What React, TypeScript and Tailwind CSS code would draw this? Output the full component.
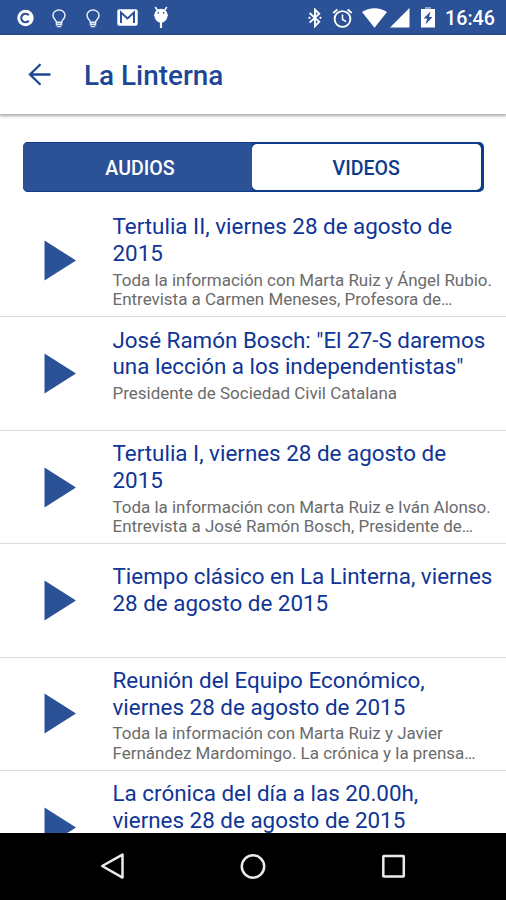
type Item = {
  title: string[];
  text: string[];
};

const items: Item[] = [
  {
    title: ["Tertulia II, viernes 28 de agosto de", "2015"],
    text: ["Toda la información con Marta Ruiz y Ángel Rubio.", "Entrevista a Carmen Meneses, Profesora de…"],
  },
  {
    title: ["José Ramón Bosch: \"El 27-S daremos", "una lección a los independentistas\""],
    text: ["Presidente de Sociedad Civil Catalana", ""],
  },
  {
    title: ["Tertulia I, viernes 28 de agosto de", "2015"],
    text: ["Toda la información con Marta Ruiz e Iván Alonso.", "Entrevista a José Ramón Bosch, Presidente de…"],
  },
  {
    title: ["Tiempo clásico en La Linterna, viernes", "28 de agosto de 2015"],
    text: [""],
  },
  {
    title: ["Reunión del Equipo Económico,", "viernes 28 de agosto de 2015"],
    text: ["Toda la información con Marta Ruiz y Javier", "Fernández Mardomingo. La crónica y la prensa…"],
  },
  {
    title: ["La crónica del día a las 20.00h,", "viernes 28 de agosto de 2015"],
    text: ["", ""],
  },
];

function Bulb() {
  return (
    <svg width="14" height="20" viewBox="0 0 14 20" fill="none" stroke="#e6ecf7" strokeWidth="1.5">
      <path d="M4.500 13.200c0-2-3.500-3.400-3.500-6.600a6 5.700 0 0 1 12 0c0 3.200-3.500 4.600-3.500 6.600z" />
      <path d="M4.500 13v3.500M9.500 13v3.500M4.500 15.300h5M4.800 17.400h4.400" />
    </svg>
  );
}

function StatusBar() {
  return (
    <div className="flex h-[35px] shrink-0 items-center bg-[#2b5197]">
      <svg className="ml-[17px]" width="17" height="18" viewBox="0 0 17 18" fill="none">
        <circle cx="8.500" cy="9" r="8.200" fill="#fff" />
        <path d="M11.800 6.200a4.300 4.300 0 1 0 0 5.600" stroke="#2b5197" strokeWidth="2.100" />
        <path d="M10.300 7v4" stroke="#fff" strokeWidth="1.600" />
      </svg>
      <div className="ml-[18px] mt-[2px]"><Bulb /></div>
      <div className="ml-[20px] mt-[2px]"><Bulb /></div>
      <svg className="ml-[17px]" width="21" height="17" viewBox="0 0 21 17">
        <rect x="0.3" y="0.3" width="20.4" height="16.4" rx="2" fill="#fff" />
        <path d="M4 14V3.5l6.5 6 6.5-6V14" fill="none" stroke="#2b5197" strokeWidth="2" />
      </svg>
      <svg className="ml-[15px]" width="16" height="23" viewBox="0 0 16 23" fill="#fff">
        <path d="M2.200 1l2.200 3.300M13.800 1l-2.200 3.300" stroke="#fff" strokeWidth="1.600" />
        <path d="M8 14v8" stroke="#fff" strokeWidth="2.200" />
        <path d="M1.500 8.500a6.500 5.800 0 0 1 13 0l.8.6-.9 1.4c-.5 3.500-3 6.100-6.400 6.100S2.100 14 1.600 10.500L.7 9.100z" />
        <circle cx="5.300" cy="6.800" r="0.900" fill="#2b5197" />
        <circle cx="10.700" cy="6.800" r="0.900" fill="#2b5197" />
      </svg>
      <svg className="ml-auto" width="14" height="20" viewBox="0 0 14 20" fill="none" stroke="#fff" strokeWidth="1.900">
        <path d="M1.600 5l9.600 8.900L7 18.200V1.600l4.200 4.100-9.600 8.900" />
        <path d="M1.400 9.800h.1M12.400 9.800h.1" strokeWidth="2.200" strokeLinecap="round" />
      </svg>
      <svg className="ml-[10px]" width="21" height="20" viewBox="0 0 21 20" fill="none" stroke="#fff" strokeWidth="1.900">
        <circle cx="10.500" cy="11" r="7.900" />
        <path d="M10.500 6.500v5l3.700 2.200" strokeWidth="1.500" />
        <path d="M1.200 4.900l4.200-3.500M19.800 4.900l-4.200-3.500" />
      </svg>
      <svg className="ml-[9px]" width="25" height="20" viewBox="0 0 25 20" fill="#fff">
        <path d="M0 4.100C7-1.100 18-1.100 25 4.100L12.500 19.700z" />
      </svg>
      <svg className="ml-[3px]" width="20" height="20" viewBox="0 0 20 20" fill="#fff">
        <path d="M0 19.500L19.500 0v19.500z" />
      </svg>
      <svg className="ml-[11px]" width="14" height="21" viewBox="0 0 14 21">
        <path d="M4 0h6v2H4z" fill="#8da3cb" />
        <path d="M0 2h14v18.500H0z" fill="#fff" />
        <path d="M9.500 4.500L2.500 11.500h3.800l-1.800 6 7-7.500H8z" fill="#2b5197" />
      </svg>
      <span className="ml-[10px] mr-[11px] w-[50px] whitespace-nowrap pt-[3px] text-[19.7px] leading-none font-medium text-white">16:46</span>
    </div>
  );
}

function Header() {
  return (
    <header className="z-10 flex h-[79px] shrink-0 items-center bg-white shadow-[0_1px_3px_1px_rgba(0,0,0,0.35)]">
      <svg className="ml-[28px]" width="23" height="23" viewBox="0 0 23 23" fill="none" stroke="#1c4795" strokeWidth="2.300">
        <path d="M22.500 11.500H2M12.500 1.200L2 11.500l10.500 10.300" />
      </svg>
      <h1 className="ml-[33px] pt-[2px] text-[27.900px] leading-none font-medium text-[#1c4795]">La Linterna</h1>
    </header>
  );
}

function Tabs() {
  return (
    <div className="mx-[22.500px] mt-[28px] flex h-[50px] w-[461px] shrink-0 overflow-hidden rounded-[5px] bg-[#0f3c8a] text-[19.600px]">
      <div className="flex w-[229px] bg-[#2b5197]">
        <button className="flex-1 border-y border-[#0f3c8a] pl-[6px] pt-[3px] font-medium text-white">AUDIOS</button>
      </div>
      <button className="my-[2px] mr-[2.500px] flex-1 rounded-[5px] bg-white pt-[3px] font-medium text-[#0f3c8a]">VIDEOS</button>
    </div>
  );
}

function Row({ item }: { item: Item }) {
  return (
    <li className="flex h-[113.450px] shrink-0 items-center border-b border-[#dcdcdc] whitespace-nowrap">
      <svg className="ml-[44px] mr-[36.500px] shrink-0" width="32" height="41" viewBox="0 0 32 41" fill="#2b5197">
        <path d="M0.500 0.500L32 20.500 0.500 40.500z" />
      </svg>
      <div className="pt-[2px]">
        <h2 className="text-[22.400px] leading-[26.700px] text-[#0f3596]">
          {item.title.map((line) => (
            <span key={line} className="block">{line}</span>
          ))}
        </h2>
        <p className="mt-[4px] text-[16.970px] leading-[19.300px] text-[#6b6b6b]">
          {item.text.map((line, i) => (
            <span key={i} className="block h-[19.300px]">{line}</span>
          ))}
        </p>
      </div>
    </li>
  );
}

function NavBar() {
  return (
    <nav className="flex h-[67px] shrink-0 items-center bg-black">
      <svg className="ml-[100px]" width="26" height="28" viewBox="0 0 26 28" fill="none" stroke="#ebebeb" strokeWidth="2.500" strokeLinejoin="round">
        <path d="M2.200 13L22.500 1.600v23z" />
      </svg>
      <svg className="ml-[114px]" width="26" height="26" viewBox="0 0 26 26" fill="none" stroke="#ebebeb" strokeWidth="2.500">
        <circle cx="13" cy="12.500" r="11.200" />
      </svg>
      <svg className="ml-[115px]" width="25" height="25" viewBox="0 0 25 25" fill="none" stroke="#ebebeb" strokeWidth="2.500">
        <rect x="2.300" y="2" width="20.500" height="20.500" rx="0.500" />
      </svg>
    </nav>
  );
}

export default function App() {
  return (
    <div className="flex h-[900px] w-[506px] flex-col overflow-hidden bg-white font-[Roboto,sans-serif]">
      <StatusBar />
      <Header />
      <main className="flex min-h-0 flex-1 flex-col overflow-hidden">
        <Tabs />
        <ul className="mt-[12px] flex min-h-0 flex-1 flex-col overflow-hidden">
          {items.map((item) => (
            <Row key={item.title[0]} item={item} />
          ))}
        </ul>
      </main>
      <NavBar />
    </div>
  );
}
